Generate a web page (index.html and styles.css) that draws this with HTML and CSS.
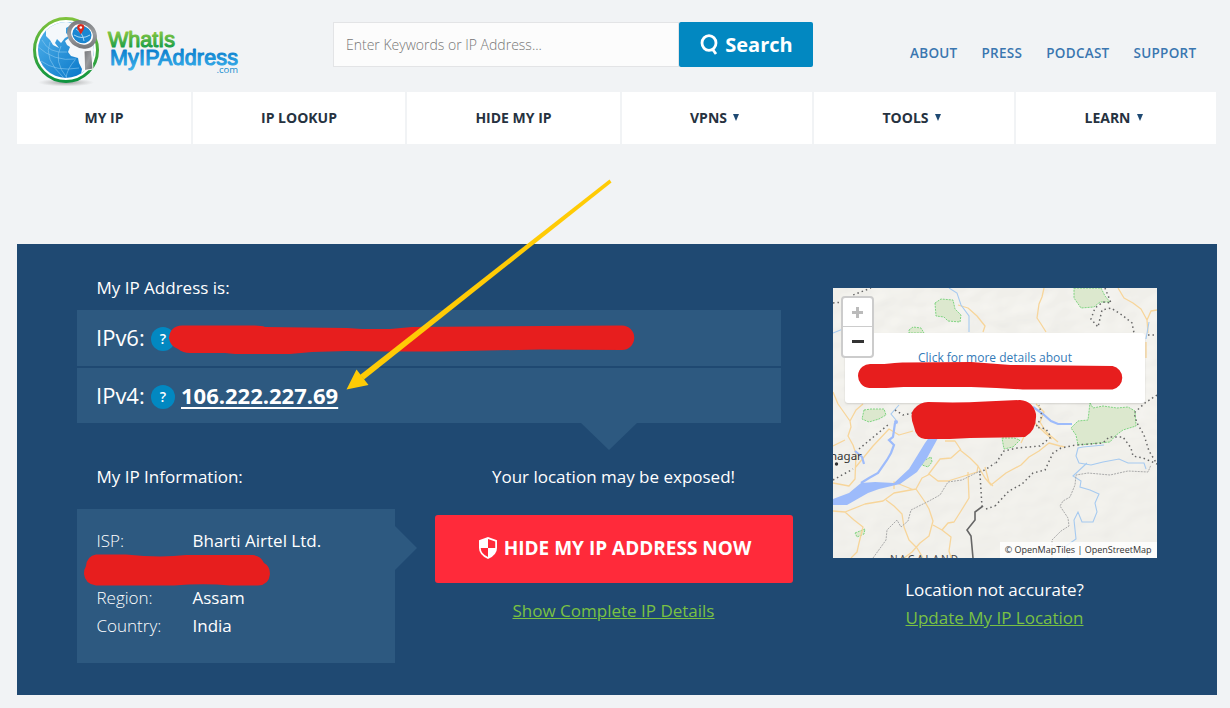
FILE: index.html
```html
<!DOCTYPE html>
<html lang="en">
<head>
<meta charset="utf-8">
<title>What Is My IP Address</title>
<link rel="stylesheet" href="styles.css">
</head>
<body>
<div class="page">
  <header class="header">
    <a class="logo">
      <svg width="212" height="78" viewBox="30 12 212 78">
        <defs>
          <linearGradient id="ring" x1="0" y1="0" x2="0" y2="1"><stop offset="0" stop-color="#7ec23c"/><stop offset="1" stop-color="#0e9440"/></linearGradient>
          <linearGradient id="sea" x1="0" y1="0" x2="1" y2="1"><stop offset="0" stop-color="#55b4ec"/><stop offset="1" stop-color="#0071c5"/></linearGradient>
          <linearGradient id="gt" gradientUnits="userSpaceOnUse" x1="0" y1="31" x2="0" y2="48"><stop offset="0" stop-color="#8cc840"/><stop offset="1" stop-color="#149c48"/></linearGradient>
          <linearGradient id="bt" gradientUnits="userSpaceOnUse" x1="0" y1="49" x2="0" y2="70"><stop offset="0" stop-color="#0a7ccb"/><stop offset="1" stop-color="#3cb2ec"/></linearGradient>
          <linearGradient id="metal" x1="0" y1="0" x2="1" y2="1"><stop offset="0" stop-color="#727477"/><stop offset=".5" stop-color="#9b9da0"/><stop offset="1" stop-color="#6b6d70"/></linearGradient>
          <radialGradient id="shade"><stop offset="0" stop-color="#777" stop-opacity=".7"/><stop offset="1" stop-color="#999" stop-opacity="0"/></radialGradient>
          <clipPath id="globe"><circle cx="66" cy="50" r="28"/></clipPath>
        </defs>
        <ellipse cx="66" cy="82.500" rx="28" ry="4" fill="url(#shade)"/>
        <circle cx="66" cy="50" r="31.500" fill="#fff" stroke="url(#ring)" stroke-width="3"/>
        <circle cx="66" cy="50" r="28" fill="url(#sea)"/>
        <g clip-path="url(#globe)">
          <path d="M46 28 55 23 66 21 73 24 66 28 66 33 69 36 65 38 61 43 57 39 55 43 59 48 53 45 50 40 46 36ZM65 41 70 37 77 40 82 38 98 42 98 68 84 79 81 74 82 69 79 63 78 58 71 56 68 52 70 47 67 45Z" fill="#f4f8fb"/>
          <path d="M37 46Q54 62 76 59M41 61Q56 72 79 68M50 42Q43 59 64 78M61 46Q53 61 67 78M75 60Q67 69 66 78M42 40Q49 54 67 52" fill="none" stroke="#8ccaf0" stroke-width=".6"/>
        </g>
        <path d="M84 51 91.500 50 93 69 84.500 70.500Z" fill="url(#metal)" stroke="#fff" stroke-width="1"/>
        <ellipse cx="82" cy="34.500" rx="13.500" ry="11.500" transform="rotate(35 82 34.500)" fill="#fff" stroke="url(#metal)" stroke-width="4"/>
        <ellipse cx="82" cy="34.500" rx="9.800" ry="8.500" transform="rotate(25 82 34.500)" fill="#1a87d2"/>
        <path d="M74 35Q82 40 90 35M76 29Q83 33 84 41" fill="none" stroke="#a9d8f3" stroke-width="1"/>
        <path d="M80.800 34.500 77.600 29Q76 24.500 80.800 24Q85.600 24.500 84 29Z" fill="#db291c"/>
        <circle cx="80.800" cy="27.500" r="1.300" fill="#fff"/>
        <text class="logo-top" x="108" y="47.300" textLength="67" fill="url(#gt)" stroke="url(#gt)">WhatIs</text>
        <text class="logo-main" x="110" y="65.300" textLength="128" fill="url(#bt)" stroke="url(#bt)">MyIPAddress</text>
        <text class="logo-com" x="216.500" y="73.200" textLength="21.500">.com</text>
      </svg>
    </a>
    <form class="search">
      <div class="search-field">Enter Keywords or IP Address...</div>
      <div class="search-button">
        <svg width="19" height="22" viewBox="0 0 19 22" fill="none" stroke="#fff" stroke-width="2.800"><ellipse cx="9" cy="9" rx="7" ry="7.400"/><path d="M12 14.500 16 20"/></svg>
        <span>Search</span>
      </div>
    </form>
    <nav class="top-links"><a>ABOUT</a><a>PRESS</a><a>PODCAST</a><a>SUPPORT</a></nav>
  </header>
  <nav class="menu">
    <a>MY IP</a><a>IP LOOKUP</a><a>HIDE MY IP</a>
    <a class="more">VPNS<i class="caret"></i></a><a class="more">TOOLS<i class="caret"></i></a><a class="more">LEARN<i class="caret"></i></a>
  </nav>
  <main class="panel">
    <section class="details">
      <h2 class="label">My IP Address is:</h2>
      <div class="ip-row"><span class="ip-kind">IPv6:</span><span class="help">?</span></div>
      <div class="ip-row ip-row-last"><span class="ip-kind">IPv4:</span><span class="help">?</span><a class="ip-value">106.222.227.69</a></div>
      <div class="columns">
        <div class="info">
          <h2 class="label">My IP Information:</h2>
          <dl class="info-card">
            <dt>ISP:</dt><dd>Bharti Airtel Ltd.</dd>
            <dt></dt><dd></dd>
            <dt>Region:</dt><dd>Assam</dd>
            <dt>Country:</dt><dd>India</dd>
          </dl>
        </div>
        <div class="action">
          <p class="warning">Your location may be exposed!</p>
          <a class="hide-button">
            <svg width="18" height="22" viewBox="0 0 18 22"><path d="M9 0 18 3.200V11Q18 18 9 22Q0 18 0 11V3.200Z" fill="#fff"/><path d="M9 2V11H16.200V4.500ZM9 11H1.700Q2 17 9 20Z" fill="#ff2a3a"/></svg>
            <span>HIDE MY IP ADDRESS NOW</span>
          </a>
          <a class="green-link details-link">Show Complete IP Details</a>
        </div>
      </div>
    </section>
    <aside class="location">
      <div class="map">
        <svg class="terrain" width="324" height="270" viewBox="0 0 324 270">
          <defs><filter id="relief" x="0" y="0" width="100%" height="100%"><feTurbulence type="fractalNoise" baseFrequency=".035 .05" numOctaves="2" seed="4"/><feDiffuseLighting lighting-color="#f6f5f1" surfaceScale="1.800" diffuseConstant="1.080"><feDistantLight azimuth="225" elevation="67"/></feDiffuseLighting></filter></defs>
          <rect width="324" height="270" fill="#f0efea"/>
          <path d="M0 0H324V125L235 155 190 195 130 205 110 270H324V0Z" filter="url(#relief)" opacity=".3"/>
          <path d="M0 0H324V112L270 120 120 95 0 150Z" filter="url(#relief)" opacity=".3"/>
          <g class="park">
            <path d="M102 15 108 11 120 12 122 21 128 27 127 34 115 33 111 29 103 28ZM76 42 80 39 88 40 91 45H76ZM31 122 38 121 51 121 53 127 46 131 36 134 29 131ZM241 0H268L272 8 277 14 267 14 261 19 248 20 241 10ZM257 115 260 120 270 118 284 120 295 119 302 123 303 138 290 142 282 148 277 154 245 157 243 147 238 140 245 133 255 132ZM90 173 98 169 99 174 95 179 89 177ZM22 245 32 241 31 246 24 249ZM169 150H181L187 152 180 159 171 161Z"/>
          </g>
          <g class="road">
            <path d="M211 0 209 9 206 16 204 30 208 36 213 44M125 17 135 20 144 28 152 38 150 44M285 0 291 10 300 15 308 21 314 32 315 45M314 32 318 23 324 22M313 54V70M0 104 5 116 17 133 23 122 30 116M17 133 18 139 15 148 20 157 23 166 22 191 16 198 0 195M0 223 12 224 32 216 50 213 61 205 83 201 89 190 95 187 107 171 118 170 127 162 137 170 145 178 144 184 128 189 115 193 105 193 96 186M53 212 61 218 69 226 71 239 76 252 84 260 90 270M83 201 92 214 96 221 100 233 96 248 87 255 79 264 71 270M100 237 109 242 115 235 121 234 128 223 136 210 135 184M109 242 118 249 116 263 118 270M12 224 21 232 30 239 26 255 24 264 18 270M61 201 61 194 81 202M22 180 40 158 56 141 66 147 80 143M112 153 122 153 128 162M145 178 152 190 158 197 173 185 188 177 196 169 206 163 216 155 227 158 232 159M188 155 194 142 202 135 212 145 219 151M0 158 12 152M152 179 156 194 160 198"/>
            <path d="M203 116 211 124 207 134 213 144 225 154"/>
          </g>
          <g class="river">
            <path d="M116 0 124 5 128 17 136 28 136 44M0 45 10 41M316 34 313 51M66 117 58 126 63 132M313 181 311 175 295 175 286 171 270 174 258 177 246 175 243 168 245 160 250 159 271 157M254 175 240 188 248 193 247 199 257 202 266 206 262 215 264 224 260 234 249 234 245 224 241 232 243 251 233 258 235 270"/>
          </g>
          <g class="water">
            <path d="M0 211 16 205 28 195 42 194 61 195 76 181 84 168 92 155 97 148 105 150 94 170 84 184 67 196 46 201 35 205 14 217 0 217Z"/>
            <path d="M62 135 60 149 56 152 61 157 58 165 54 172 45 185 36 190 28 195M22 163 29 169 31 176M200 119 210 126 218 133 225 136 239 136" class="stream"/>
          </g>
          <g class="border">
            <path d="M0 15 10 14 20 7 38 0M272 0 278 15 270 14 262 20 258 31 265 39 269 22 278 20 289 27 299 35 301 45M315 47 324 47M324 107 312 115 301 125 304 135 311 147 316 163 324 176M0 192 20 181M26 161 56 136M62 122 70 127 80 125M146 184 152 182 162 175M162 218 176 203 189 196 200 185 212 182 220 165 228 160 243 157 270 155 276 149 290 149 298 160 300 168 310 170 324 176M147 186 149 219M163 175 171 163 184 160 207 158 218 149 213 141 203 139 209 128 206 117M153 221 162 218"/>
          </g>
          <path class="range" d="M40 270 53 252 54 242 64 232 68 239 75 233 78 222 86 218 96 213 107 207 115 194 129 192 147 183M219 270 219 252 228 243 236 238 235 230 227 218 230 213 237 209 242 197 243 187 255 185 277 187 295 183 315 184 318 177"/>
          <path class="ridge" d="M150 218 142 224 142 232 134 242 138 248 140 270"/>
          <circle cx="3.500" cy="176" r="1.700" fill="#333"/><circle cx="63" cy="134" r="2" fill="#9dbbfb"/>
          <text class="city" x="-3" y="172">nagar</text>
          <text class="region" x="57" y="275" textLength="68">NAGALAND</text>
        </svg>
        <div class="popup">Click for more details about</div>
        <div class="zoom"><span class="plus"></span><span class="minus"></span></div>
        <div class="credit">© OpenMapTiles | OpenStreetMap</div>
      </div>
      <p class="accuracy">Location not accurate?</p>
      <a class="green-link">Update My IP Location</a>
    </aside>
  </main>
</div>
<svg class="markup" width="1230" height="708" viewBox="0 0 1230 708">
  <g fill="#e71e1e">
    <path d="M182 325.500H255Q262 325.500 265 327L305 327.500 347 328 362 329H390L412 327 622 325.500A12 12 0 0 1 622 350L540 349.500 440 351.500H385L347 351 312 352 290 354H235L225 353 190 353Q183 353 178 349Q170 346 169 338Q170 326 182 325.500Z"/>
    <path d="M96 554.500H126Q160 558 186 555H253Q261 556 264 563Q270 566 270 574Q269 585 258 585.500H230Q204 583 174 585.500H96Q85 584 84 574Q84 569 86 566Q87 556 96 554.500Z"/>
    <path d="M871 364H884Q898 362 905 362.500L970 362 1009 365 1110 366A12 12 0 0 1 1110 389.500H1021L995 388 970 387H903L886 388H869A12 12 0 0 1 871 364Z" transform="translate(-8.500 0) scale(1.010 1)"/>
    <path d="M928 402Q960 403 985 401.500L1020 400Q1033 401 1036 414Q1037 430 1025 437L970 438 950 439H925Q916 438 914 427Q909 414 914 409Q920 402 928 402Z"/>
  </g>
  <g fill="#ffcb05"><path d="M609.500 179.500 611.500 182.500 364 379.500 360 375Z"/><path d="M346.500 389.500 356.500 369.500 368.500 385Z"/></g>
</svg>
</body>
</html>
```
FILE: styles.css
```css
* { box-sizing: border-box; }
body { margin: 0; background: #f1f3f5; font-family: "Open Sans", sans-serif; color: #fff; }
.page { width: 1230px; height: 708px; padding: 0 13px 0 17px; overflow: hidden; }
.header { height: 92px; display: flex; align-items: flex-start; }
.logo { margin: 12px 0 0 13px; width: 212px; height: 78px; }
.logo svg { display: block; }
.logo text { font-family: "Liberation Sans", sans-serif; }
.logo-top, .logo-main { font-size: 21.500px; stroke-width: 1.100; stroke-linejoin: round; }
.logo .logo-com { font-family: "Open Sans", sans-serif; font-size: 9.500px; fill: #168ed0; }
.search { display: flex; width: 480px; height: 45px; margin: 22px 0 0 91px; }
.search-field { width: 346px; border: 1px solid #e3e4e6; background: #fcfcfc; color: #777; font-size: 14px; font-weight: 300; line-height: 43px; padding-left: 12px; }
.search-button { width: 134px; background: #0288c1; border-radius: 2px; display: flex; align-items: center; justify-content: center; gap: 6px; font-size: 20px; font-weight: 700; padding-left: 1px; }
.top-links { display: flex; gap: 24px; margin: 44px 0 0 97px; font-size: 13.500px; line-height: 19px; font-weight: 600; letter-spacing: .280px; color: #3a76b0; }
.menu { height: 52px; display: grid; grid-template-columns: 174px 212px 213px 190px 200px 200px; gap: 2px; }
.menu a { background: #fff; color: #26323f; font-size: 14px; font-weight: 700; display: flex; align-items: center; justify-content: center; padding-bottom: 2px; }
.menu .more { padding-right: 5px; }
.caret { border: 3.500px solid transparent; border-top: 7px solid #1f4a73; border-bottom: 0; margin-left: 6px; }
.panel { margin-top: 100px; width: 1200px; height: 451px; background: #1f4972; padding: 0 60px; display: flex; justify-content: space-between; }
.details { width: 716px; padding-top: 32px; }
.label { margin: 0 0 0 19.500px; font-size: 17px; line-height: 24px; font-weight: 400; }
.ip-row { width: 704px; height: 56px; padding-left: 19px; background: #2d5980; display: flex; align-items: center; font-size: 22px; line-height: 28px; }
.label + .ip-row { margin-top: 10px; }
.ip-row-last { height: 55px; margin-top: 2px; position: relative; }
.ip-row-last::after { content: ""; position: absolute; left: 504px; top: 55px; border: 28px solid transparent; border-top: 27px solid #2d5980; border-bottom: 0; }
.ip-kind { width: 55px; font-weight: 400; padding-bottom: 2px; }
.help { width: 24px; height: 24px; margin-top: 2px; border-radius: 50%; background: #0288c1; font-size: 14px; font-weight: 600; line-height: 24px; text-align: center; }
.ip-value { margin-left: 6px; padding-bottom: 2px; font-weight: 700; text-decoration: underline; text-decoration-thickness: 2px; text-underline-offset: 3px; text-decoration-skip-ink: none; }
.columns { display: flex; gap: 40px; padding-top: 42px; }
.info { width: 318px; }
.info-card { position: relative; margin: 20px 0 0; height: 154px; padding: 17px 19.500px; background: #2d5980; display: grid; grid-template: repeat(4, 28.300px) / 96px 1fr; font-size: 17px; line-height: 29px; }
.info-card::after { content: ""; position: absolute; left: 318px; top: 17px; border: 22px solid transparent; border-left-color: #2d5980; border-right: 0; }
.info-card dt { font-weight: 300; }
.info-card dd { margin: 0; }
.action { width: 358px; display: flex; flex-direction: column; align-items: center; }
.warning { margin: 0; padding-right: 1px; font-size: 17px; line-height: 24px; }
.hide-button { margin-top: 26px; width: 358px; height: 68px; border-radius: 3px; background: #ff2a3a; display: flex; align-items: center; justify-content: center; gap: 7px; font-size: 19px; font-weight: 700; padding: 0 0 2px 2px; }
.green-link { font-size: 17px; line-height: 24px; color: #7ac143; text-decoration: underline; margin-right: 1px; }
.details-link { margin-top: 16px; }
.location { width: 324px; padding-top: 44px; display: flex; flex-direction: column; align-items: center; }
.map { position: relative; width: 324px; height: 270px; overflow: hidden; }
.terrain { display: block; }
.park { fill: #dce8ce; stroke: #65ce69; stroke-width: .8; stroke-dasharray: 2 1; }
.road { fill: none; stroke: #f7d59a; stroke-width: 1.300; stroke-linejoin: round; }
.river { fill: none; stroke: #a6caf0; stroke-width: 1.100; }
.water { fill: #9dbbfb; }
.stream { fill: none; stroke: #9dbbfb; stroke-width: 2.200; }
.border { fill: none; stroke: #666; stroke-width: 1.500; stroke-dasharray: 1.500 3; }
.range { fill: none; stroke: #aaa; stroke-width: 1; stroke-dasharray: 2 1; }
.ridge { fill: none; stroke: #666; stroke-width: 1.600; }
.city { font-family: "Noto Sans", sans-serif; font-size: 11.500px; fill: #333; }
.region { font-family: "Noto Sans", sans-serif; font-size: 10px; fill: #444; }
.popup { position: absolute; left: 12px; top: 45px; width: 300px; height: 70px; padding-top: 16px; background: #fff; border-radius: 3px; box-shadow: 0 1px 2px #0002; color: #337ab7; font-size: 12px; line-height: 18px; text-align: center; }
.zoom { position: absolute; left: 8px; top: 8px; width: 33px; height: 62px; border: 2px solid #ccc; border-radius: 4px; background: #fff; display: grid; grid-template-rows: 1fr 1fr; }
.plus { border-bottom: 1px solid #ccc; background: linear-gradient(#bbb, #bbb) center / 11px 3px no-repeat, linear-gradient(#bbb, #bbb) center / 3px 11px no-repeat; }
.minus { background: linear-gradient(#333, #333) center / 12px 3px no-repeat; }
.credit { position: absolute; right: 0; bottom: 0; width: 157px; height: 16px; padding-right: 5.500px; background: #fffc; color: #333; font-size: 9px; line-height: 16px; text-align: right; white-space: nowrap; }
.accuracy { margin: 20px 0 4px; padding-right: 1px; font-size: 17px; line-height: 24px; }
.markup { position: absolute; left: 0; top: 0; }
```
